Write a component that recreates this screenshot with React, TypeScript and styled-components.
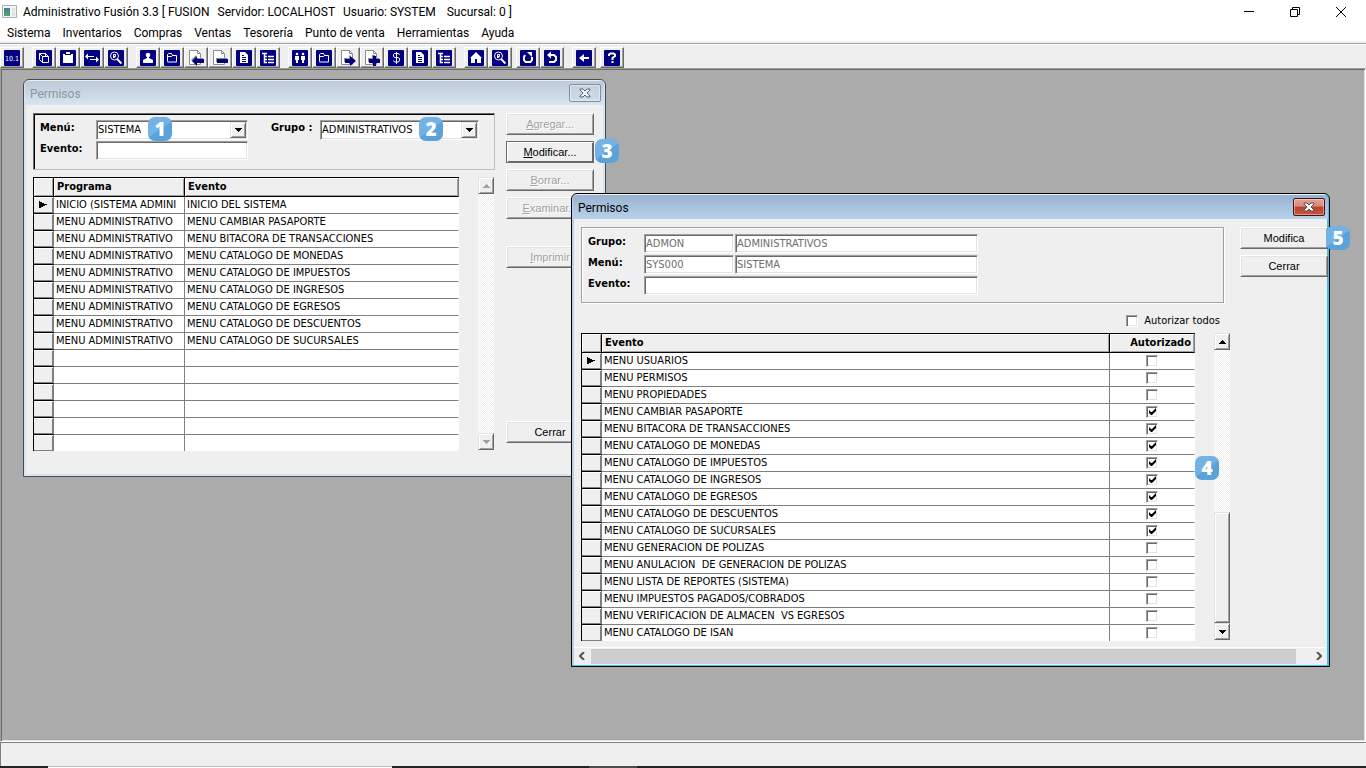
import React from 'react';
import styled, { createGlobalStyle, css } from 'styled-components';

const face = '#efefef';
const shadow = '#a0a0a0';
const dark = '#696969';
const navy = '#000080';
const uiFont = `'DejaVu Sans Condensed', 'DejaVu Sans', sans-serif`;
const segoe = `Roboto, 'Open Sans', sans-serif`;
const buttonFont = `'Liberation Sans', Arial, sans-serif`;

const GlobalStyle = createGlobalStyle`
  * { box-sizing: border-box; }
  body { margin: 0; background: ${face}; font: 11px/16px ${uiFont}; color: #000; }
  button, input, select { font: inherit; color: inherit; margin: 0; border-radius: 0; }
`;

const Screen = styled.div`
  display: flex;
  flex-direction: column;
  min-height: 100vh;
  overflow: hidden;
`;

const TitleBar = styled.header`
  display: flex;
  align-items: center;
  height: 23px;
  padding: 0 2px;
  background: #fff;
  font: 12px/16px ${segoe};
`;

const TitleText = styled.h1`
  display: flex;
  flex: 1;
  gap: 8px;
  margin: 0 0 0 6px;
  font: inherit;
  white-space: nowrap;
`;

const Caption = styled.button`
  display: flex;
  align-items: center;
  justify-content: center;
  width: 46px;
  height: 22px;
  padding: 0;
  border: 0;
  background: none;
`;

const MenuBar = styled.nav`
  display: flex;
  gap: 12px;
  height: 18px;
  padding-left: 7px;
  background: #fff;
  font: 12px/20px ${segoe};
`;

const MenuLink = styled.a`
  color: #000;
  text-decoration: none;
  white-space: nowrap;
`;

const ToolBar = styled.div`
  display: flex;
  gap: 8px;
  height: 25px;
  padding-top: 3px;
  margin-top: 2px;
  border-top: 1px solid ${shadow};
  box-shadow: inset 0 1px #fff;
`;

const ToolCluster = styled.div`
  display: flex;
  gap: 4px;
`;

const ToolGroup = styled.div`
  display: flex;
`;

const ToolButton = styled.button`
  display: flex;
  align-items: flex-start;
  width: 24px;
  height: 21px;
  padding: 2px 0 0 3px;
  border: 1px solid;
  border-color: #fff ${dark} ${dark} #fff;
  background: ${face};
  box-shadow: inset -1px -1px ${shadow};
`;

const Desktop = styled.main`
  position: relative;
  flex: 1;
  background: #ababab;
  border: 1px solid;
  border-color: ${shadow} #fff #fff ${shadow};
  box-shadow: inset 1px 1px ${dark}, inset -1px -1px #e3e3e3;
`;

const StatusBar = styled.footer`
  height: 24px;
  border-top: 1px solid #808080;
  border-left: 1px solid #808080;
`;

const TaskStrip = styled.div`
  display: flex;
  height: 2px;
  background: #222;
`;

const TaskItem = styled.span<{ $active?: boolean }>`
  width: ${p => (p.$active ? 344 : 48)}px;
  margin-left: ${p => (p.$active ? 48 : 197)}px;
  background: ${p => (p.$active ? '#fff' : '#4c4c4c')};
  border-top: ${p => (p.$active ? '1px solid #bbb' : '0')};
`;

const Window = styled.section<{ $active?: boolean; $x: number; $y: number; $w: number; $h: number }>`
  position: absolute;
  left: ${p => p.$x}px;
  top: ${p => p.$y}px;
  width: ${p => p.$w}px;
  height: ${p => p.$h}px;
  display: flex;
  flex-direction: column;
  padding: 1px;
  border: 1px solid ${p => (p.$active ? '#000' : '#4a4a4a')};
  border-radius: 6px 6px 0 0;
  background: ${face};
  box-shadow: ${p =>
    p.$active ? 'inset -2px -1px #41c0ea, inset 2px 0 #b9d1ea' : 'inset -2px -2px #d7e4f1, inset 2px 0 #d7e4f1'};
`;

const WindowTitle = styled.header<{ $active?: boolean }>`
  display: flex;
  align-items: flex-start;
  justify-content: space-between;
  height: 24px;
  flex: none;
  padding: 3px 3px 0 5px;
  border-radius: 4px 4px 0 0;
  background: ${p =>
    p.$active ? 'linear-gradient(#98b3d0, #b9d1ea)' : 'linear-gradient(#bccad9, #d7e4f1)'};
  color: ${p => (p.$active ? '#000' : '#8f959b')};
  font: 12px/20px ${segoe};

  h2 { margin: 0; font: inherit; }
`;

const CloseButton = styled.button<{ $active?: boolean }>`
  display: flex;
  align-items: center;
  justify-content: center;
  width: 32px;
  height: 18px;
  padding: 0;
  border-radius: 2px;
  border: 1px solid ${p => (p.$active ? '#4c1018' : '#7d8ea3')};
  background: ${p =>
    p.$active
      ? 'linear-gradient(#e4a091, #d58a7b 45%, #b8432d 50%, #c8553c)'
      : 'linear-gradient(#c4d1e0, #cfdbe8)'};
  box-shadow: inset 0 0 0 1px ${p => (p.$active ? 'rgba(255,255,255,.4)' : 'rgba(255,255,255,.45)')};
`;

const WindowBody = styled.div<{ $left: number }>`
  display: flex;
  align-items: flex-start;
  padding: 8px 0 0 ${p => p.$left}px;
`;

const Column = styled.div<{ $w: number }>`
  width: ${p => p.$w}px;
  flex: none;
`;

const FilterBox = styled.div`
  display: flex;
  gap: 23px;
  width: 462px;
  height: 57px;
  padding: 6px 0 0 6px;
  border: 1px solid;
  border-color: ${dark} #c0c0c0 #c0c0c0 ${dark};
  box-shadow: inset 1px 1px #000;
`;

const DetailBox = styled.div`
  width: 643px;
  height: 76px;
  padding: 6px 0 0 6px;
  border: 1px solid ${shadow};
  box-shadow: inset 1px 1px #fff, 1px 1px #fff;
`;

const FieldGrid = styled.div<{ $columns: string; $gap?: number }>`
  display: grid;
  grid-template-columns: ${p => p.$columns};
  column-gap: ${p => p.$gap ?? 0}px;
  align-content: start;
  row-gap: 1px;
`;

const Label = styled.label`
  height: 20px;
  font-weight: bold;
  line-height: 16px;
`;

const sunken = css`
  border: 1px solid;
  border-color: ${shadow} #fff #fff ${shadow};
  box-shadow: inset 1px 1px ${dark}, inset -1px -1px #e3e3e3;
  background: #fff;
`;

const TextBox = styled.input<{ $span?: boolean }>`
  ${sunken}
  width: 100%;
  height: 19px;
  padding: 0 1px;
  outline: 0;
  grid-column: ${p => (p.$span ? 'span 2' : 'auto')};
  &:disabled { color: #6d6d6d; }
`;

const Combo = styled.div`
  position: relative;
  height: 20px;

  select {
    ${sunken}
    appearance: none;
    width: 100%;
    height: 20px;
    padding: 0 18px 0 1px;
    outline: 0;
  }
`;

const raised = css`
  border: 1px solid;
  border-color: #e3e3e3 ${dark} ${dark} #e3e3e3;
  box-shadow: inset 1px 1px #fff, inset -1px -1px ${shadow};
  background: ${face};
`;

const ComboArrow = styled.span`
  ${raised}
  position: absolute;
  right: 2px;
  top: 2px;
  width: 16px;
  height: 16px;
  display: flex;
  align-items: center;
  justify-content: center;
  pointer-events: none;
`;

const GridArea = styled.div<{ $top: number }>`
  display: flex;
  align-items: flex-start;
  gap: 19px;
  margin-top: ${p => p.$top}px;
`;

const Grid = styled.table<{ $w: number }>`
  width: ${p => p.$w}px;
  flex: none;
  table-layout: fixed;
  border-spacing: 0;
  border-top: 1px solid #000;
  border-left: 1px solid #000;

  th, td { padding: 0 2px; white-space: nowrap; overflow: hidden; text-align: left; }
  thead th {
    height: 19px;
    padding: 0 3px;
    line-height: 16px;
    border-bottom: 1px solid #000;
    border-right: 1px solid #000;
    background: ${face};
    box-shadow: inset 1px 1px #fff, inset -1px -1px ${shadow};
  }
  thead th:last-child { border-right-color: #808080; }
  td {
    height: 17px;
    line-height: 14px;
    background: #fff;
    border-bottom: 1px solid #808080;
    border-right: 1px solid #808080;
  }
  td:last-child { border-right-color: #fff; }
  tbody th {
    height: 17px;
    padding: 0 0 0 4px;
    line-height: 0;
    background: ${face};
    border-right: 1px solid #808080;
    border-bottom: 1px solid #000;
    box-shadow: inset 0 1px #fff, inset -1px -1px #808080;
  }
  tbody tr:last-child > * { border-bottom: 0; height: 16px; }
`;

const HeadEnd = styled.th`
  && { text-align: right; }
`;

const CheckCell = styled.td`
  && { text-align: center; line-height: 0; }
`;

const CheckBox = styled.input`
  ${sunken}
  appearance: none;
  width: 12px;
  height: 12px;
  vertical-align: top;
  &:checked::after {
    content: '';
    display: block;
    width: 7px;
    height: 7px;
    margin: 1px 0 0 2px;
    background: #000;
    clip-path: polygon(0 2px, 2px 4px, 3px 4px, 7px 0, 7px 3px, 3px 7px, 2px 7px, 0 5px);
  }
`;

const CheckRow = styled.div`
  display: flex;
  align-items: center;
  justify-content: flex-end;
  gap: 6px;
  height: 16px;
  margin: 10px 10px 0 0;
`;

const ScrollBar = styled.div<{ $h: number }>`
  display: flex;
  flex-direction: column;
  width: 16px;
  height: ${p => p.$h}px;
  background: repeating-conic-gradient(#fff 0 25%, ${face} 0 50%) 0 0 / 2px 2px;
`;

const ScrollButton = styled.button`
  ${raised}
  display: flex;
  align-items: center;
  justify-content: center;
  width: 16px;
  height: 17px;
  padding: 0;
`;

const Thumb = styled.div`
  ${raised}
  height: 111px;
`;

const Spacer = styled.div`
  flex: 1;
`;

const ButtonStack = styled.div<{ $left: number }>`
  display: flex;
  flex-direction: column;
  gap: 6px;
  margin-left: ${p => p.$left}px;
`;

const PushButton = styled.button<{ $default?: boolean; $top?: number }>`
  width: 88px;
  height: 22px;
  flex: none;
  padding: 0;
  margin-top: ${p => p.$top ?? 0}px;
  border: 1px solid;
  border-color: #fff ${dark} ${dark} #fff;
  background: ${face};
  box-shadow: inset 1px 1px #e3e3e3, inset -1px -1px ${shadow};
  font: 11px/18px ${buttonFont};
  ${p => p.$default && css`
    border-color: ${dark};
    box-shadow: inset 1px 1px #fff, inset -1px -1px ${dark};
  `}
  &:disabled { color: ${shadow}; text-shadow: 1px 1px #fff; }
`;

const HorizontalScroll = styled.div`
  display: flex;
  align-items: center;
  height: 17px;
  margin: 6px 2px 0 1px;
  border-top: 1px solid #fff;
`;

const HorizontalButton = styled.button<{ $end?: boolean }>`
  display: flex;
  align-items: center;
  justify-content: ${p => (p.$end ? 'flex-end' : 'flex-start')};
  width: ${p => (p.$end ? 30 : 17)}px;
  padding: ${p => (p.$end ? '0 4px 0 0' : '0 0 0 5px')};
  border: 0;
  background: none;
`;

const HorizontalThumb = styled.div`
  flex: 1;
  height: 15px;
  background: #cdcdcd;
`;

const Badge = styled.span<{ $x: number; $y: number }>`
  position: absolute;
  left: ${p => p.$x}px;
  top: ${p => p.$y}px;
  z-index: 5;
  width: 24px;
  height: 24px;
  border-radius: 7px;
  background: linear-gradient(145deg, #72b2e4 50%, #5aa2da 52%);
  color: #fff;
  font: 800 19px/24px 'Open Sans', sans-serif;
  text-align: center;
`;

const Arrow = ({ up, muted }: { up?: boolean; muted?: boolean }) => (
  <svg width="7" height="4" viewBox="0 0 7 4" shapeRendering="crispEdges">
    <path d={up ? 'M3 0h1v1h1v1h1v1h1v1H0V3h1V2h1V1h1z' : 'M0 0h7v1H6v1H5v1H4v1H3V3H2V2H1V1H0z'} fill={muted ? '#a0a0a0' : '#000'} />
  </svg>
);

const Marker = () => (
  <svg width="10" height="8" viewBox="0 0 10 8" shapeRendering="crispEdges">
    <path d="M1 0h1v1h2v1h2v1h3v1H7v1H5v1H3v1H1z" />
  </svg>
);

const Cross = ({ active }: { active?: boolean }) => (
  <svg width="12" height="10" viewBox="0 0 12 10">
    <path d="M1 1h3l2 2 2-2h3v1L8 5l3 3v1H8L6 7 4 9H1V8l3-3-3-3z" fill={active ? '#fff' : '#eef3f8'} stroke={active ? '#4c4f5c' : '#5b6470'} strokeWidth="1" />
  </svg>
);

/* White line art on a navy tile; the document icons have a page instead of a tile. */
const art: Record<string, React.ReactNode> = {
  version: <text x="8" y="11" fontSize="7" textAnchor="middle" fill="#fff" stroke="none" fontFamily="DejaVu Sans Condensed">10.1</text>,
  cube: <path d="M6.5 6.5h6v6h-6zM3.5 3.5h6l3 3M3.5 3.5v6l3 3M3.5 3.5l3 3M9.5 3.5v3" />,
  paste: <path d="M3 4h2v1h6V4h2v9H3zM6 2h4v2H6z" fill="#fff" stroke="none" />,
  swap: <path d="M1 6.500L4 3.500V6h6v1H4v2.500zM15 9.500l-3 3V10H6V9h6V6.500z" fill="#fff" stroke="none" />,
  find: <><circle cx="6.5" cy="6" r="4" /><path d="M5.500 8V4.500h2v2h-2l2 1.500" /><path d="M9 9l4.500 4.500" strokeWidth="2" /></>,
  person: <><circle cx="8" cy="5" r="2.300" fill="#fff" stroke="none" /><path d="M7 7h2v1l4 2v3H3v-3l4-2z" fill="#fff" stroke="none" /></>,
  folder: <path d="M3.500 11.500v-7l1-1h3l1 2h4v6.500h-9M3.500 6.500h4l1-1" />,
  report: <><path d="M4 2h5l3 3v8H4z" fill="#fff" stroke="none" /><path d="M6 5.500h2M6 7.500h4M6 9.500h4M6 11.500h4" stroke={navy} /></>,
  tree: <path d="M2 3.500h5M4.500 3.500v9H7M4.500 6.500H7M4.500 9.500H7M8 6.500h6M8 9.500h6M8 12.500h6" strokeWidth="1.500" />,
  people: <><circle cx="5" cy="4" r="1.300" fill="#fff" stroke="none" /><circle cx="11" cy="4" r="1.300" fill="#fff" stroke="none" /><path d="M3 6h4v4H6v3H4v-3H3zM9 6h4v4h-1v3h-2v-3H9z" fill="#fff" stroke="none" /></>,
  money: <path d="M11.500 5l-1-1.500h-4l-1 1v2l1.500 1h3l1.500 1v2l-1 1.500h-4l-1-1.500M8.500 2v12" />,
  home: <path d="M8 2l6 6h-1v5H9V9H7v4H3V8H2z" fill="#fff" stroke="none" />,
  redo: <><path d="M5 5L4 7v3l1.500 2h5L12 10V7" strokeWidth="2" /><path d="M7 2h5v5z" fill="#fff" stroke="none" /></>,
  undo: <><path d="M6 5h4l2 2v3l-2 2H5" strokeWidth="2" /><path d="M7 1.500v7L3 5z" fill="#fff" stroke="none" /></>,
  back: <><path d="M5 8h8" strokeWidth="2" /><path d="M8 4v8L3 8z" fill="#fff" stroke="none" /></>,
  help: <path d="M5 6V4.500L6.500 3.500h3L11 4.500V6L8.500 8v2M8.500 11v2" strokeWidth="2" />,
};
const marks: Record<string, string> = {
  'page-left': 'M4 11l5-5v3h7v4H9v3z',
  'page-minus': 'M5 9h11v4H5z',
  'page-right': 'M5 9h5V6l6 5-6 5v-3H5z',
  'page-plus': 'M9 6h3v3h4v4h-4v3H9v-3H5V9h4z',
};

const ToolIcon = ({ name }: { name: string }) => (
  <svg width="16" height="16" viewBox="0 0 16 16">
    {marks[name] ? (
      <>
        <path d="M1.500.500h8l3 3v11h-11z" fill="#fff" stroke="#8c8c8c" />
        <path d="M9.500.500v3h3" fill="none" stroke="#8c8c8c" />
        <path d={marks[name]} fill="#8c8c8c" transform="translate(-1 -1)" />
        <path d={marks[name]} fill={navy} />
      </>
    ) : (
      <>
        <rect width="16" height="16" rx="1" fill={navy} />
        <g fill="none" stroke="#fff">{art[name]}</g>
      </>
    )}
  </svg>
);

const toolbar: string[][][] = [
  [['version']],
  [['cube', 'paste', 'swap', 'find']],
  [['person', 'folder', 'page-left', 'page-minus', 'report', 'tree']],
  [['people', 'folder', 'page-right', 'page-plus', 'money', 'report', 'tree']],
  [['home', 'find'], ['redo', 'undo']],
  [['back'], ['help']],
];

const menus = ['Sistema', 'Inventarios', 'Compras', 'Ventas', 'Tesorería', 'Punto de venta', 'Herramientas', 'Ayuda'];

const programRows: [string, string][] = [
  ['INICIO (SISTEMA ADMINI', 'INICIO DEL SISTEMA'],
  ...['CAMBIAR PASAPORTE', 'BITACORA DE TRANSACCIONES', 'CATALOGO DE MONEDAS', 'CATALOGO DE IMPUESTOS', 'CATALOGO DE INGRESOS', 'CATALOGO DE EGRESOS', 'CATALOGO DE DESCUENTOS', 'CATALOGO DE SUCURSALES']
    .map((e): [string, string] => ['MENU ADMINISTRATIVO', `MENU ${e}`]),
  ...Array.from({ length: 6 }, (): [string, string] => ['', '']),
];

const permissions: [string, boolean][] = [
  ['USUARIOS', false],
  ['PERMISOS', false],
  ['PROPIEDADES', false],
  ['CAMBIAR PASAPORTE', true],
  ['BITACORA DE TRANSACCIONES', true],
  ['CATALOGO DE MONEDAS', true],
  ['CATALOGO DE IMPUESTOS', true],
  ['CATALOGO DE INGRESOS', true],
  ['CATALOGO DE EGRESOS', true],
  ['CATALOGO DE DESCUENTOS', true],
  ['CATALOGO DE SUCURSALES', true],
  ['GENERACION DE POLIZAS', false],
  ['ANULACION \u00a0DE GENERACION DE POLIZAS', false],
  ['LISTA DE REPORTES (SISTEMA)', false],
  ['IMPUESTOS PAGADOS/COBRADOS', false],
  ['VERIFICACION DE ALMACEN \u00a0VS EGRESOS', false],
  ['CATALOGO DE ISAN', false],
];

const PermissionsList = () => (
  <Window $x={22} $y={10} $w={583} $h={398}>
    <WindowTitle>
      <h2>Permisos</h2>
      <CloseButton aria-label="Cerrar ventana"><Cross /></CloseButton>
    </WindowTitle>
    <WindowBody $left={8}>
      <Column $w={462}>
        <FilterBox>
          <FieldGrid $columns="56px 152px">
            <Label htmlFor="menu">Menú:</Label>
            <Combo>
              <select id="menu"><option>SISTEMA</option></select>
              <ComboArrow><Arrow /></ComboArrow>
            </Combo>
            <Label htmlFor="evento">Evento:</Label>
            <TextBox id="evento" />
          </FieldGrid>
          <FieldGrid $columns="49px 159px">
            <Label htmlFor="grupo">Grupo :</Label>
            <Combo>
              <select id="grupo"><option>ADMINISTRATIVOS</option></select>
              <ComboArrow><Arrow /></ComboArrow>
            </Combo>
          </FieldGrid>
        </FilterBox>
        <GridArea $top={7}>
          <Grid $w={426}>
            <colgroup><col style={{ width: 20 }} /><col style={{ width: 131 }} /><col /></colgroup>
            <thead><tr><th /><th>Programa</th><th>Evento</th></tr></thead>
            <tbody>
              {programRows.map(([program, event], i) => (
                <tr key={i}>
                  <th>{i === 0 && <Marker />}</th>
                  <td>{program}</td>
                  <td>{event}</td>
                </tr>
              ))}
            </tbody>
          </Grid>
          <ScrollBar $h={273}>
            <ScrollButton aria-label="Subir" disabled><Arrow up muted /></ScrollButton>
            <Spacer />
            <ScrollButton aria-label="Bajar" disabled><Arrow muted /></ScrollButton>
          </ScrollBar>
        </GridArea>
      </Column>
      <ButtonStack $left={11}>
        <PushButton disabled><u>A</u>gregar...</PushButton>
        <PushButton $default><u>M</u>odificar...</PushButton>
        <PushButton disabled><u>B</u>orrar...</PushButton>
        <PushButton disabled><u>E</u>xaminar...</PushButton>
        <PushButton disabled $top={21}><u>I</u>mprimir</PushButton>
        <PushButton $top={147}>Cerrar</PushButton>
      </ButtonStack>
    </WindowBody>
  </Window>
);

const PermissionsEditor = () => (
  <Window $active $x={570} $y={124} $w={759} $h={474}>
    <WindowTitle $active>
      <h2>Permisos</h2>
      <CloseButton $active aria-label="Cerrar ventana"><Cross active /></CloseButton>
    </WindowTitle>
    <WindowBody $left={8}>
      <Column $w={649}>
        <DetailBox>
          <FieldGrid $columns="55px 90px 243px" $gap={1}>
            <Label htmlFor="grupo-id">Grupo:</Label>
            <TextBox id="grupo-id" disabled defaultValue="ADMON" />
            <TextBox aria-label="Nombre del grupo" disabled defaultValue="ADMINISTRATIVOS" />
            <Label htmlFor="menu-id">Menú:</Label>
            <TextBox id="menu-id" disabled defaultValue="SYS000" />
            <TextBox aria-label="Nombre del menú" disabled defaultValue="SISTEMA" />
            <Label htmlFor="evento-id">Evento:</Label>
            <TextBox id="evento-id" $span />
          </FieldGrid>
        </DetailBox>
        <CheckRow>
          <CheckBox type="checkbox" id="todos" />
          <label htmlFor="todos">Autorizar todos</label>
        </CheckRow>
        <GridArea $top={4}>
          <Grid $w={614}>
            <colgroup><col style={{ width: 20 }} /><col /><col style={{ width: 85 }} /></colgroup>
            <thead><tr><th /><th>Evento</th><HeadEnd>Autorizado</HeadEnd></tr></thead>
            <tbody>
              {permissions.map(([event, allowed], i) => (
                <tr key={event}>
                  <th>{i === 0 && <Marker />}</th>
                  <td>MENU {event}</td>
                  <CheckCell><CheckBox type="checkbox" defaultChecked={allowed} aria-label={event} /></CheckCell>
                </tr>
              ))}
            </tbody>
          </Grid>
          <ScrollBar $h={307}>
            <ScrollButton aria-label="Subir"><Arrow up /></ScrollButton>
            <Spacer />
            <Thumb />
            <ScrollButton aria-label="Bajar"><Arrow /></ScrollButton>
          </ScrollBar>
        </GridArea>
      </Column>
      <ButtonStack $left={10}>
        <PushButton>Modifica</PushButton>
        <PushButton>Cerrar</PushButton>
      </ButtonStack>
    </WindowBody>
    <HorizontalScroll>
      <HorizontalButton aria-label="Izquierda">
        <svg width="6" height="8" viewBox="0 0 6 8"><path d="M5 0L1 4l4 4" fill="none" stroke="#505050" strokeWidth="2" /></svg>
      </HorizontalButton>
      <HorizontalThumb />
      <HorizontalButton $end aria-label="Derecha">
        <svg width="6" height="8" viewBox="0 0 6 8"><path d="M1 0l4 4-4 4" fill="none" stroke="#505050" strokeWidth="2" /></svg>
      </HorizontalButton>
    </HorizontalScroll>
  </Window>
);

export default function App() {
  return (
    <Screen>
      <GlobalStyle />
      <TitleBar>
        <svg width="15" height="13" viewBox="0 0 15 13">
          <defs>
            <linearGradient id="pane" x2="0" y2="1"><stop stopColor="#3f7fa8" /><stop offset="1" stopColor="#4fa86a" /></linearGradient>
          </defs>
          <path d="M.5.5h14v12H.5z" fill="#f4f4f4" stroke="#a8b0b8" />
          <path d="M2 3h6v8H2z" fill="url(#pane)" />
          <path d="M10 3h3v3h-3zM10 7h3v4h-3z" fill="#dfe3e8" />
        </svg>
        <TitleText>
          <span>Administrativo Fusión 3.3 [ FUSION</span>
          <span>Servidor: LOCALHOST</span>
          <span>Usuario: SYSTEM</span>
          <span>&nbsp;Sucursal: 0 ]</span>
        </TitleText>
        <Caption aria-label="Minimizar"><svg width="10" height="10"><path d="M0 4.500h10" stroke="#000" /></svg></Caption>
        <Caption aria-label="Restaurar"><svg width="10" height="10" fill="none" stroke="#000"><path d="M.5 2.500h7v7h-7zM2.500 2.500v-2h7v7h-2" /></svg></Caption>
        <Caption aria-label="Cerrar"><svg width="10" height="10" stroke="#000"><path d="M0 0l10 10M10 0L0 10" /></svg></Caption>
      </TitleBar>
      <MenuBar>
        {menus.map(m => <MenuLink key={m} href="#">{m}</MenuLink>)}
      </MenuBar>
      <ToolBar>
        {toolbar.map((cluster, c) => (
          <ToolCluster key={c}>
            {cluster.map((group, g) => (
              <ToolGroup key={g}>
                {group.map(name => <ToolButton key={name} aria-label={name}><ToolIcon name={name} /></ToolButton>)}
              </ToolGroup>
            ))}
          </ToolCluster>
        ))}
      </ToolBar>
      <Desktop>
        <PermissionsList />
        <PermissionsEditor />
        <Badge $x={147} $y={48}>1</Badge>
        <Badge $x={418} $y={48}>2</Badge>
        <Badge $x={594} $y={70}>3</Badge>
        <Badge $x={1194} $y={387}>4</Badge>
        <Badge $x={1325} $y={157}>5</Badge>
      </Desktop>
      <StatusBar />
      <TaskStrip><TaskItem $active /><TaskItem /></TaskStrip>
    </Screen>
  );
}
